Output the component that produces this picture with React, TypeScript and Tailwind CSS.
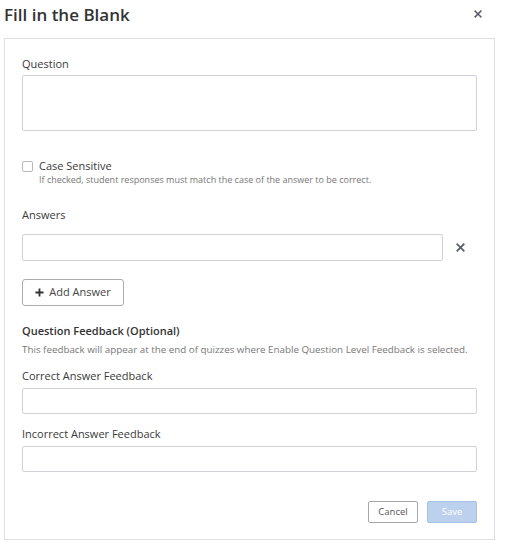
import React from "react";

function XIcon({ size = 8, className = "" }: { size?: number; className?: string }) {
  return (
    <svg width={size} height={size} viewBox="0 0 10 10" className={className}>
      <path d="M1.5 1.5 L8.5 8.5 M8.5 1.5 L1.5 8.5" stroke="currentColor" strokeWidth="2" strokeLinecap="square" />
    </svg>
  );
}

export default function App() {
  return (
    <div className="w-[505px] h-[550px] bg-white text-[#333] font-['Open_Sans',sans-serif] relative">
      <div className="flex items-center justify-between h-[30px] pl-[4px] pr-[23px]">
        <h1 className="text-[17px] font-semibold text-[#333] leading-none mt-[-1px]">Fill in the Blank</h1>
        <XIcon size={8} className="text-[#5a5f6a] mt-[-2px]" />
      </div>
      <div className="mt-[8px] ml-[4px] w-[491px] border border-[#dcdfe4] px-[17px] pt-[17px] pb-[16px] flex flex-col">
        <label className="text-[11px] leading-[16px] text-[#3a3a3a]">Question</label>
        <div className="mt-[3px] h-[56px] border border-[#cfd3d9] rounded-[2px]" />

        <div className="mt-[27px] flex items-start">
          <div className="mt-[3px] w-[11px] h-[11px] border border-[#b5b9bf] rounded-[2px] shrink-0" />
          <div className="ml-[6px] flex flex-col">
            <span className="text-[11px] leading-[16px] text-[#3a3a3a]">Case Sensitive</span>
            <span className="text-[9px] leading-[12px] text-[#777]">
              If checked, student responses must match the case of the answer to be correct.
            </span>
          </div>
        </div>

        <label className="mt-[21px] text-[11px] leading-[16px] text-[#3a3a3a]">Answers</label>
        <div className="mt-[11px] flex items-center">
          <div className="w-[421px] h-[27px] border border-[#cfd3d9] rounded-[2px]" />
          <XIcon size={9} className="ml-[13px] text-[#5a5f6a]" />
        </div>

        <div className="mt-[18px]">
          <button className="h-[27px] w-[102px] border border-[#a9adb3] rounded-[3px] flex items-center justify-center gap-[5px] text-[11px] text-[#444]">
            <svg width="9" height="9" viewBox="0 0 10 10">
              <path d="M5 0.5 V9.5 M0.5 5 H9.5" stroke="#333" strokeWidth="2" />
            </svg>
            <span>Add Answer</span>
          </button>
        </div>

        <div className="mt-[17px] text-[11px] leading-[16px] font-semibold text-[#333]">Question Feedback (Optional)</div>
        <div className="mt-[5px] text-[9.8px] leading-[12px] text-[#777] whitespace-nowrap">
          This feedback will appear at the end of quizzes where Enable Question Level Feedback is selected.
        </div>

        <label className="mt-[12px] text-[11px] leading-[16px] text-[#3a3a3a]">Correct Answer Feedback</label>
        <div className="mt-[4px] h-[26px] border border-[#cfd3d9] rounded-[2px]" />

        <label className="mt-[12px] text-[11px] leading-[16px] text-[#3a3a3a]">Incorrect Answer Feedback</label>
        <div className="mt-[4px] h-[26px] border border-[#cfd3d9] rounded-[2px]" />

        <div className="mt-[29px] flex justify-end gap-[9px]">
          <button className="h-[22px] w-[50px] border border-[#a4a8ae] rounded-[2px] text-[9.5px] text-[#555] bg-white">
            Cancel
          </button>
          <button className="h-[22px] w-[50px] border border-[#a6c0e4] rounded-[2px] text-[9.5px] text-white bg-[#bcd1ee]">
            Save
          </button>
        </div>
      </div>
    </div>
  );
}
